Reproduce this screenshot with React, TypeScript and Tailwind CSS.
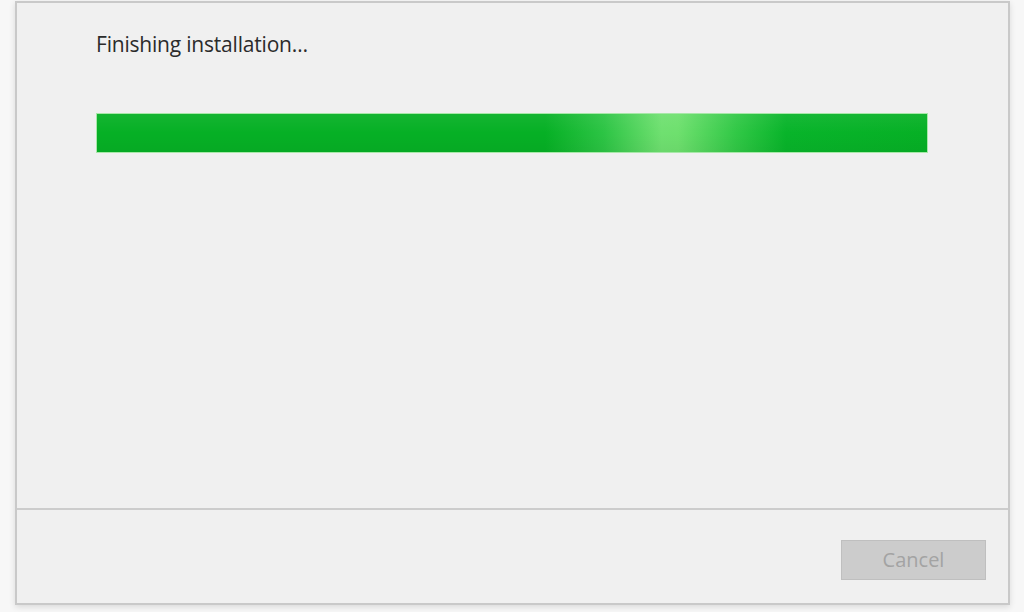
import React from 'react';

export default function App() {
  return (
    <div className="w-[1024px] h-[612px] bg-[#f7f7f7] pl-[15px] pr-[14px] pt-[1px] pb-[7px] flex" style={{ fontFamily: '"Open Sans", "Noto Sans", sans-serif' }}>
      <div className="flex-1 flex flex-col bg-[#f0f0f0] border-2 border-[#c9c9c9] shadow-[0_2px_6px_rgba(0,0,0,0.12)]">
        {/* Body */}
        <div className="flex-1 pl-[79px] pr-[80px] pt-[26px]">
          <div className="text-[21px] leading-[30px] text-[#2b2b2b] tracking-[-0.2px]">Finishing installation…</div>
          <div className="mt-[54px] h-[40px] relative border border-[#a8e8a8] bg-[#06b025] overflow-hidden">
            <div className="absolute inset-0 bg-[linear-gradient(90deg,#06b025_0%,#06b025_54%,#2cc444_61%,#6fe070_68%,#6ee06e_70%,#31c846_77%,#08b42a_83%,#06b025_100%)]" />
            <div className="absolute inset-0 bg-[linear-gradient(180deg,rgba(255,255,255,0.06)_0%,rgba(255,255,255,0)_50%,rgba(0,0,0,0.04)_100%)]" />
          </div>
        </div>
        {/* Footer */}
        <div className="h-[95px] border-t-2 border-[#cccccc] flex items-start justify-end pt-[30px] pr-[22px]">
          <button className="w-[145px] h-[40px] bg-[#cccccc] border border-[#bfbfbf] text-[#a3a3a3] text-[20px] leading-none">Cancel</button>
        </div>
      </div>
    </div>
  );
}
